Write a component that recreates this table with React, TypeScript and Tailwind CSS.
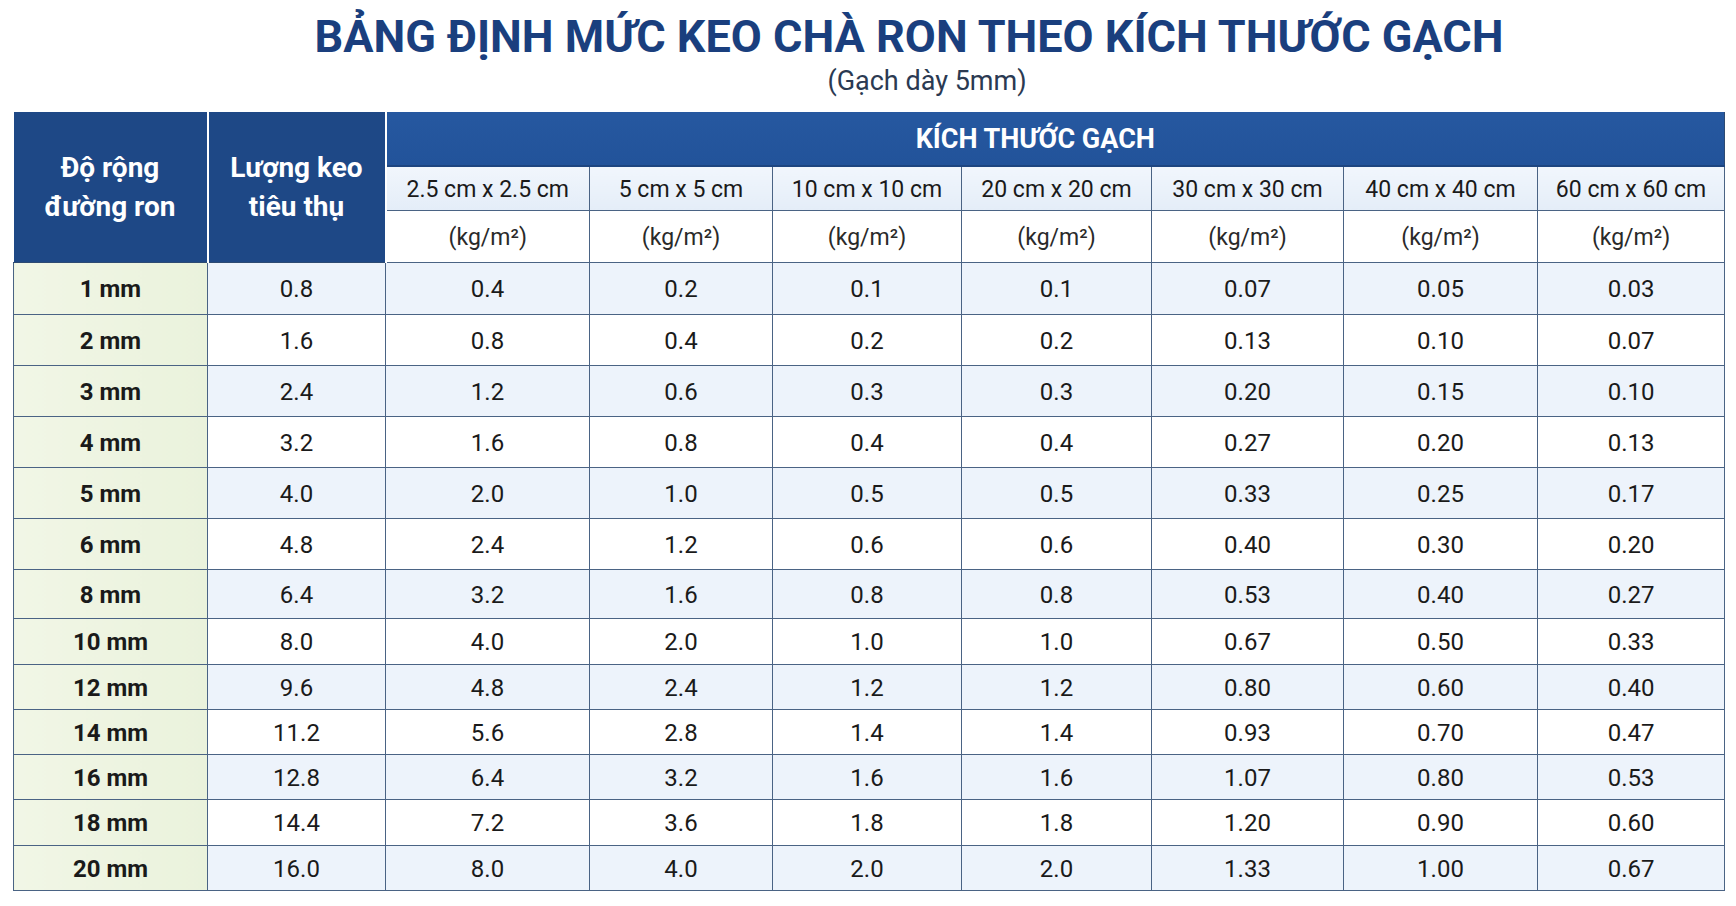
import React from "react";

const sizes = [
  "2.5 cm x 2.5 cm",
  "5 cm x 5 cm",
  "10 cm x 10 cm",
  "20 cm x 20 cm",
  "30 cm x 30 cm",
  "40 cm x 40 cm",
  "60 cm x 60 cm",
];

// width, consumption, then one value per tile size; h = row height class
const rows = [
  { w: "1 mm", h: "h-[52px]", v: ["0.8", "0.4", "0.2", "0.1", "0.1", "0.07", "0.05", "0.03"] },
  { w: "2 mm", h: "h-[51px]", v: ["1.6", "0.8", "0.4", "0.2", "0.2", "0.13", "0.10", "0.07"] },
  { w: "3 mm", h: "h-[51px]", v: ["2.4", "1.2", "0.6", "0.3", "0.3", "0.20", "0.15", "0.10"] },
  { w: "4 mm", h: "h-[51px]", v: ["3.2", "1.6", "0.8", "0.4", "0.4", "0.27", "0.20", "0.13"] },
  { w: "5 mm", h: "h-[51px]", v: ["4.0", "2.0", "1.0", "0.5", "0.5", "0.33", "0.25", "0.17"] },
  { w: "6 mm", h: "h-[51px]", v: ["4.8", "2.4", "1.2", "0.6", "0.6", "0.40", "0.30", "0.20"] },
  { w: "8 mm", h: "h-[49px]", v: ["6.4", "3.2", "1.6", "0.8", "0.8", "0.53", "0.40", "0.27"] },
  { w: "10 mm", h: "h-[46px]", v: ["8.0", "4.0", "2.0", "1.0", "1.0", "0.67", "0.50", "0.33"] },
  { w: "12 mm", h: "h-[45px]", v: ["9.6", "4.8", "2.4", "1.2", "1.2", "0.80", "0.60", "0.40"] },
  { w: "14 mm", h: "h-[45px]", v: ["11.2", "5.6", "2.8", "1.4", "1.4", "0.93", "0.70", "0.47"] },
  { w: "16 mm", h: "h-[45px]", v: ["12.8", "6.4", "3.2", "1.6", "1.6", "1.07", "0.80", "0.53"] },
  { w: "18 mm", h: "h-[46px]", v: ["14.4", "7.2", "3.6", "1.8", "1.8", "1.20", "0.90", "0.60"] },
  { w: "20 mm", h: "h-[45px]", v: ["16.0", "8.0", "4.0", "2.0", "2.0", "1.33", "1.00", "0.67"] },
];

const colWidths = [
  "w-[194px]",
  "w-[178px]",
  "w-[204px]",
  "w-[183px]",
  "w-[189px]",
  "w-[190px]",
  "w-[192px]",
  "w-[194px]",
  "w-[187px]",
];

export default function App() {
  return (
    <div className="w-[1736px] h-[906px] bg-white font-['Roboto','Liberation_Sans',sans-serif] overflow-hidden">
      <div className="pt-[14px] pl-[82px] text-center">
        <h1 className="text-[45px] leading-[45px] font-bold text-[#1a3f7e]">
          BẢNG ĐỊNH MỨC KEO CHÀ RON THEO KÍCH THƯỚC GẠCH
        </h1>
      </div>
      <div className="mt-[9px] pl-[118px] text-center text-[27px] leading-[27px] text-[#2b3a52]">
        (Gạch dày 5mm)
      </div>

      <table className="mt-[17px] ml-[13px] table-fixed border-collapse w-[1711px] text-[#1a1a1a]">
        <colgroup>
          {colWidths.map((c, i) => (
            <col key={i} className={c} />
          ))}
        </colgroup>
        <thead>
          <tr className="h-[54px]">
            <th
              rowSpan={3}
              className="bg-[#1e4886] text-white text-[28px] leading-[39px] font-bold border-r-2 border-r-white border-b border-b-[#2d4a72]"
            >
              Độ rộng
              <br />
              đường ron
            </th>
            <th
              rowSpan={3}
              className="bg-[#1e4886] text-white text-[28px] leading-[39px] font-bold border-r-2 border-r-white border-b border-b-[#2d4a72]"
            >
              Lượng keo
              <br />
              tiêu thụ
            </th>
            <th
              colSpan={7}
              className="bg-gradient-to-b from-[#2658a0] to-[#22539a] text-white text-[27px] font-bold pt-[2px] pr-[40px] border-b-2 border-b-[#1d4580] border-r border-r-[#2d4a72]"
            >
              KÍCH THƯỚC GẠCH
            </th>
          </tr>
          <tr className="h-[44px]">
            {sizes.map((s) => (
              <th
                key={s}
                className="bg-gradient-to-b from-[#f1f6fc] to-[#e4edf8] text-[23px] font-normal pt-[3px] border border-[#4a6384]"
              >
                {s}
              </th>
            ))}
          </tr>
          <tr className="h-[52px]">
            {sizes.map((s) => (
              <th
                key={s}
                className="bg-white text-[23px] font-normal text-[#2a2a2a] pt-[4px] border border-[#4a6384]"
              >
                (kg/m²)
              </th>
            ))}
          </tr>
        </thead>
        <tbody>
          {rows.map((r, ri) => (
            <tr key={r.w} className={r.h}>
              <td className="bg-gradient-to-r from-[#f1f6e6] to-[#eaf2dc] text-center text-[24px] font-bold pt-[2px] border border-[#4a6384]">
                {r.w}
              </td>
              {r.v.map((v, ci) => (
                <td
                  key={ci}
                  className={`text-center text-[24px] pt-[2px] border border-[#4a6384] ${
                    ri % 2 === 0 ? "bg-[#edf3fb]" : "bg-white"
                  }`}
                >
                  {v}
                </td>
              ))}
            </tr>
          ))}
        </tbody>
      </table>
    </div>
  );
}
